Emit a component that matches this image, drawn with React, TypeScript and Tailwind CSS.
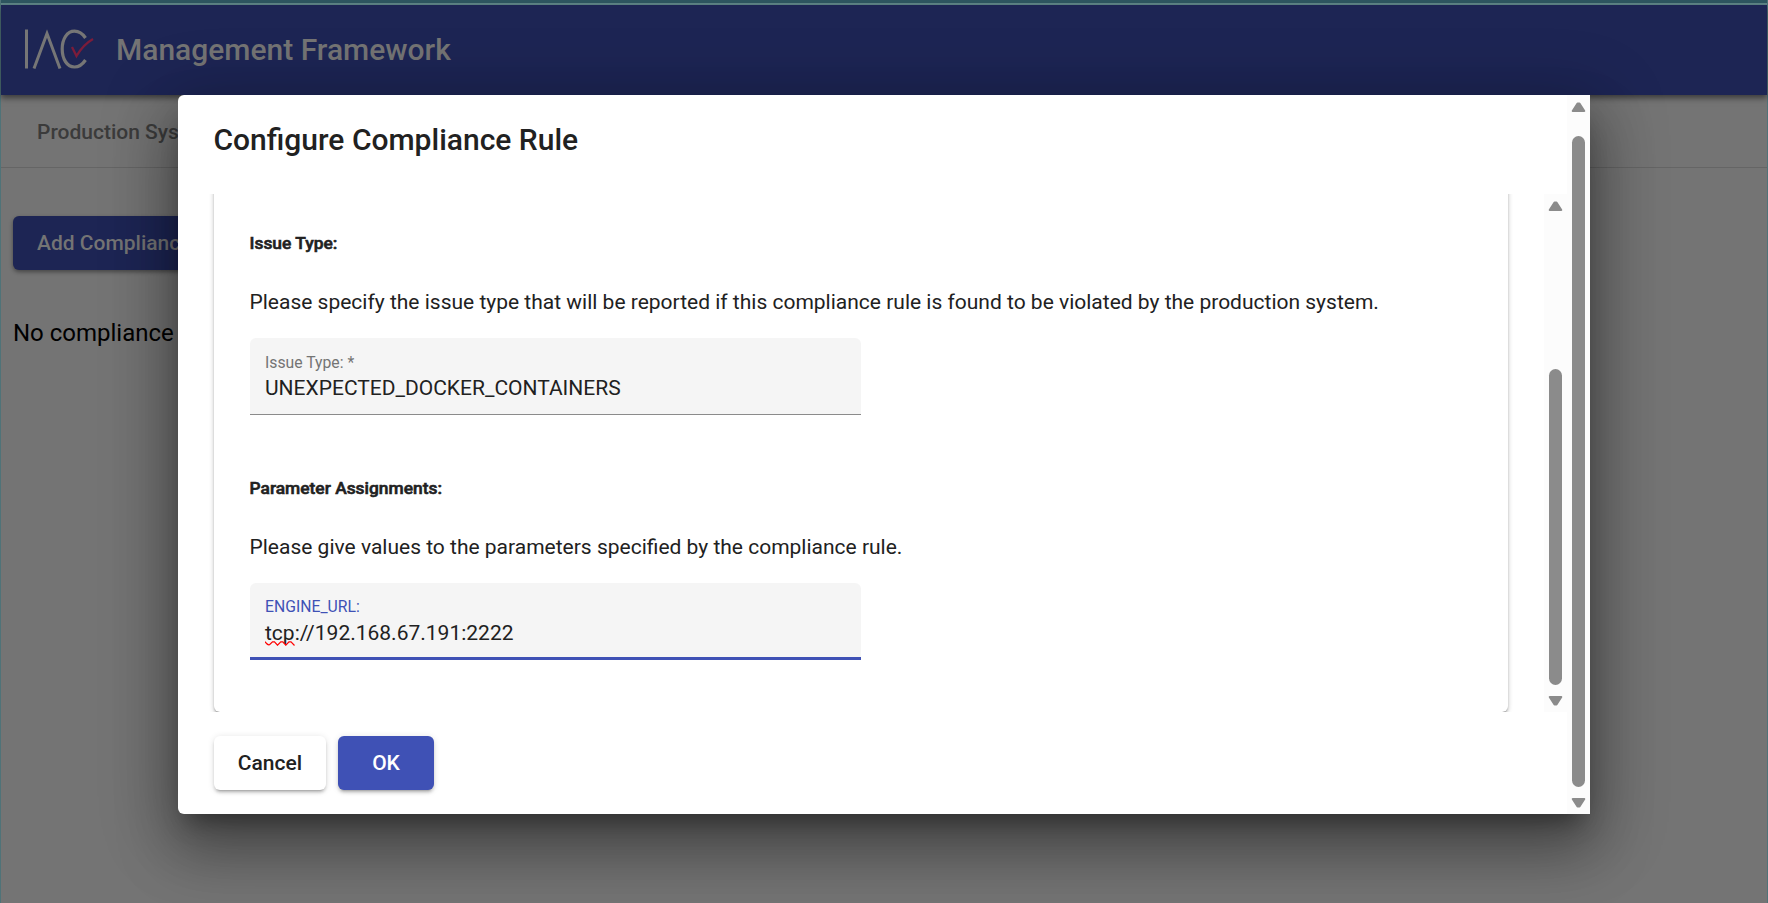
import React from "react";

function Arrow({ down = false }: { down?: boolean }) {
  return (
    <svg width="15" height="10" viewBox="0 0 15 10" className={down ? "rotate-180" : ""}>
      <path d="M6.500 1.500H8.500L13.300 9H1.700Z" fill="#8b8b8b" stroke="#8b8b8b" strokeWidth="2" strokeLinejoin="round" />
    </svg>
  );
}

function Logo() {
  return (
    <svg width="70" height="40" viewBox="0 0 70 40" fill="none" className="mb-[3px] shrink-0">
      <path d="M1.500 0.500V39.500" stroke="#767676" strokeWidth="3" />
      <path d="M9 39.500L22 4.500L35 39.500" stroke="#767676" strokeWidth="3" />
      <path d="M60.500 9C57.500 4.500 53.500 2.200 49.500 2.200C42 2.200 37.200 10 37.200 20C37.200 30 42 38 49.500 38C53.500 38 57.500 35.500 60.500 31" stroke="#767676" strokeWidth="3.200" />
      <path d="M47 18L51.500 27C55 21 61 14 68 10" stroke="#7c1c3a" strokeWidth="2.300" />
    </svg>
  );
}

export default function App() {
  return (
    <div className="relative h-[903px] w-[1768px] overflow-hidden bg-[#747474] font-[Roboto,sans-serif]">
      <div className="flex h-full flex-col border-x border-[#4f7378]">
        <div className="h-[5px] shrink-0 border-b-2 border-[#5f8688] bg-[#2e5660]" />
        <header className="relative flex h-[90px] shrink-0 items-center bg-[#1d2554] pl-6 shadow-[0_3px_6px_rgba(0,0,0,0.5)]">
          <Logo />
          <h1 className="mb-0.5 ml-[21px] text-[30px] font-medium text-[#747474]">Management Framework</h1>
        </header>
        <nav className="flex h-[73px] shrink-0 items-center border-b border-[#656565] pl-9 pt-1 text-[21px] font-medium text-[#3b3b3b]">
          Production Systems
        </nav>
        <div className="flex flex-col items-start pl-3 pt-12">
          <button className="h-[54px] rounded-md bg-[#1d2554] px-6 pt-0.5 text-[21px] font-medium text-[#747474] shadow-[0_2px_4px_rgba(0,0,0,0.4)]">
            Add Compliance Rule
          </button>
          <p className="mt-12 text-2xl leading-[30px] text-black">No compliance rules</p>
        </div>
      </div>

      <div className="absolute left-[178px] top-[95px] flex h-[719px] w-[1412px] rounded-l-md bg-white text-[#212121] shadow-[0_16px_22px_-10px_rgba(0,0,0,0.36),0_36px_57px_4px_rgba(0,0,0,0.26),0_14px_69px_12px_rgba(0,0,0,0.23)]">
        <div className="flex min-w-0 flex-1 flex-col">
          <h2 className="h-[99px] shrink-0 pl-[35.5px] pt-[22px] text-[30px] font-medium leading-[46px]">Configure Compliance Rule</h2>
          <div className="flex h-[518px] shrink-0 justify-between overflow-hidden pl-6">
            <div className="flex h-full overflow-hidden px-3">
              <section className="-mt-3 h-[530px] w-[1294px] rounded-md pl-[35.5px] pt-[46px] shadow-[0_3px_2px_-2px_rgba(0,0,0,0.2),0_2px_2px_rgba(0,0,0,0.14),0_2px_5px_rgba(0,0,0,0.24)]">
                <h3 className="text-[17.4px] font-medium leading-[30px] [-webkit-text-stroke:0.6px_#212121]">Issue Type:</h3>
                <p className="mt-[29px] text-[21px] leading-[30px]">
                  Please specify the issue type that will be reported if this compliance rule is found to be violated by the production system.
                </p>
                <div className="ml-[0.5px] mt-[21px] h-[77px] w-[611px] rounded-t-md border-b border-[#8b8b8b] bg-[#f5f5f5] pl-[15px] pt-[15px]">
                  <div className="text-[15.75px] leading-5 text-[#747474]">Issue Type: *</div>
                  <div className="mt-px text-[21px] leading-[28px]">UNEXPECTED_DOCKER_CONTAINERS</div>
                </div>
                <h3 className="mt-[58px] text-[17.4px] font-medium leading-[30px] [-webkit-text-stroke:0.6px_#212121]">Parameter Assignments:</h3>
                <p className="mt-[29px] text-[21px] leading-[30px]">Please give values to the parameters specified by the compliance rule.</p>
                <div className="ml-[0.5px] mt-[21px] h-[77px] w-[611px] rounded-t-md border-b-[3px] border-[#3f51b5] bg-[#f5f5f5] pl-[15px] pt-[14px]">
                  <div className="text-[15.75px] leading-5 text-[#3f51b5]">ENGINE_URL:</div>
                  <div className="relative mt-0.5 text-[21px] leading-[28px]">
                    tcp://192.168.67.191:2222
                    <svg className="absolute left-0 top-[22px]" width="30" height="5" viewBox="0 0 30 5" fill="none">
                      <path d="M0 0.700Q2.500 4.500 4.500 3.800L7.500 0.900H9.500L12.500 4.200L15.800 0.900H17.800L20.800 4.200L24 0.900H26L29.500 4.500" stroke="#ff0000" strokeWidth="1.2" />
                    </svg>
                  </div>
                </div>
              </section>
            </div>
            <div className="flex w-[23px] flex-col items-center bg-[#fcfcfc] pt-[7px]">
              <Arrow />
              <div className="mt-[158px] h-[316px] w-[13px] rounded-full bg-[#8b8b8b]" />
              <div className="mt-[11px]"><Arrow down /></div>
            </div>
          </div>
          <div className="flex gap-3 pl-9 pt-6 text-[21px] font-medium">
            <button className="h-[54px] w-28 rounded-md bg-white pt-0.5 shadow-[0_4px_2px_-3px_rgba(0,0,0,0.2),0_3px_3px_rgba(0,0,0,0.14),0_1px_7px_rgba(0,0,0,0.12)]">Cancel</button>
            <button className="h-[54px] w-24 rounded-md bg-[#3f51b5] pt-0.5 text-white shadow-[0_4px_2px_-3px_rgba(0,0,0,0.2),0_3px_3px_rgba(0,0,0,0.14),0_1px_7px_rgba(0,0,0,0.12)]">OK</button>
          </div>
        </div>
        <div className="flex w-[23px] flex-col items-center bg-[#fcfcfc] pt-[7px]">
          <Arrow />
          <div className="mt-6 h-[651px] w-[13px] rounded-full bg-[#8b8b8b]" />
          <div className="mt-[11px]"><Arrow down /></div>
        </div>
      </div>
    </div>
  );
}
